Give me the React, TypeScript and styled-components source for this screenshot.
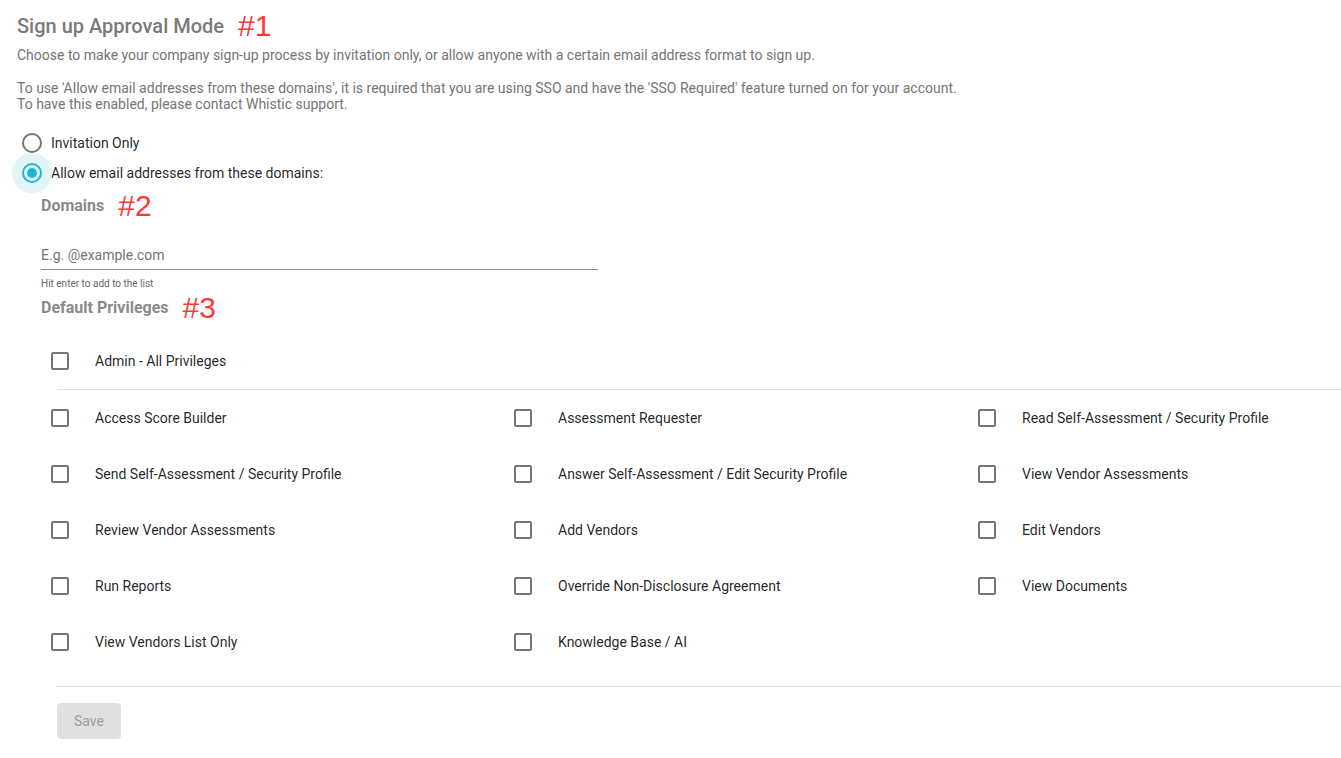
import { ReactNode } from 'react';
import styled, { createGlobalStyle } from 'styled-components';

const GlobalStyle = createGlobalStyle`
  html, body {
    margin: 0;
    padding: 0;
    background: #fff;
    overflow-x: hidden;
  }
  body {
    font-family: Roboto, 'Liberation Sans', Arial, sans-serif;
    -webkit-font-smoothing: antialiased;
  }
`;

const privileges = [
  'Access Score Builder',
  'Assessment Requester',
  'Read Self-Assessment / Security Profile',
  'Send Self-Assessment / Security Profile',
  'Answer Self-Assessment / Edit Security Profile',
  'View Vendor Assessments',
  'Review Vendor Assessments',
  'Add Vendors',
  'Edit Vendors',
  'Run Reports',
  'Override Non-Disclosure Agreement',
  'View Documents',
  'View Vendors List Only',
  'Knowledge Base / AI',
];

const SectionTitle = ({ children, tag, size }: { children: ReactNode; tag: string; size: 'lg' | 'md' }) => (
  <StyledTitleRow $size={size}>
    <StyledTitle $size={size}>{children}</StyledTitle>
    <StyledTag>{tag}</StyledTag>
  </StyledTitleRow>
);

const Radio = ({ checked, label }: { checked?: boolean; label: string }) => (
  <StyledRadioRow>
    <StyledRadioWrap>
      {checked && <StyledHalo />}
      <StyledRadioRing $checked={checked}>{checked && <StyledRadioDot />}</StyledRadioRing>
    </StyledRadioWrap>
    <StyledRadioLabel>{label}</StyledRadioLabel>
  </StyledRadioRow>
);

const Checkbox = ({ label }: { label: string }) => (
  <StyledCheckRow>
    <StyledBox />
    <StyledCheckLabel>{label}</StyledCheckLabel>
  </StyledCheckRow>
);

const App = () => {
  return (
    <>
      <GlobalStyle />
      <StyledPage>
        <SectionTitle size="lg" tag="#1">
          Sign up Approval Mode
        </SectionTitle>
        <StyledText>
          Choose to make your company sign-up process by invitation only, or allow anyone with a certain email
          address format to sign up.
        </StyledText>
        <StyledText $gap>
          To use 'Allow email addresses from these domains', it is required that you are using SSO and have the 'SSO
          Required' feature turned on for your account.
          <br />
          To have this enabled, please contact Whistic support.
        </StyledText>

        <StyledRadioGroup>
          <Radio label="Invitation Only" />
          <Radio checked label="Allow email addresses from these domains:" />
        </StyledRadioGroup>

        <StyledDomains>
          <SectionTitle size="md" tag="#2">
            Domains
          </SectionTitle>
          <StyledInput placeholder="E.g. @example.com" />
          <StyledHelper>Hit enter to add to the list</StyledHelper>

          <SectionTitle size="md" tag="#3">
            Default Privileges
          </SectionTitle>
          <StyledAdmin>
            <Checkbox label="Admin - All Privileges" />
          </StyledAdmin>
          <StyledDivider />
          <StyledGrid>
            {privileges.map((p) => (
              <Checkbox key={p} label={p} />
            ))}
          </StyledGrid>
          <StyledDivider $bottom />
          <StyledSave disabled>Save</StyledSave>
        </StyledDomains>
      </StyledPage>
    </>
  );
};

export default App;

const StyledPage = styled.div`
  padding: 8px 0 19px 17px;
`;

const StyledTitleRow = styled.div<{ $size: 'lg' | 'md' }>`
  display: flex;
  align-items: center;
  gap: ${(p) => (p.$size === 'lg' ? '14px' : '14px')};
  height: ${(p) => (p.$size === 'lg' ? '36px' : '34px')};
  margin-top: ${(p) => (p.$size === 'lg' ? '0' : '1px')};
`;

const StyledTitle = styled.h2<{ $size: 'lg' | 'md' }>`
  margin: 0;
  font-size: ${(p) => (p.$size === 'lg' ? '20px' : '16px')};
  font-weight: ${(p) => (p.$size === 'lg' ? 500 : 700)};
  color: ${(p) => (p.$size === 'lg' ? '#7a7a7a' : '#8a8a8a')};
  line-height: 1.2;
`;

const StyledTag = styled.span`
  font-family: 'Liberation Sans', Arial, sans-serif;
  font-size: 30px;
  line-height: 1;
  color: #fb3a3a;
`;

const StyledText = styled.p<{ $gap?: boolean }>`
  margin: ${(p) => (p.$gap ? '17px' : '3px')} 0 0;
  font-size: 14px;
  line-height: 16px;
  color: #757575;
`;

const StyledRadioGroup = styled.div`
  margin-top: 16px;
  display: flex;
  flex-direction: column;
`;

const StyledRadioRow = styled.label`
  display: flex;
  align-items: center;
  height: 30px;
`;

const StyledRadioWrap = styled.span`
  position: relative;
  width: 20px;
  height: 20px;
  margin-left: 5px;
  margin-right: 9px;
`;

const StyledHalo = styled.span`
  position: absolute;
  left: -10px;
  top: -10px;
  width: 40px;
  height: 40px;
  border-radius: 50%;
  background: #e1f5f9;
`;

const StyledRadioRing = styled.span<{ $checked?: boolean }>`
  position: relative;
  box-sizing: border-box;
  display: flex;
  align-items: center;
  justify-content: center;
  width: 20px;
  height: 20px;
  border-radius: 50%;
  border: 2px solid ${(p) => (p.$checked ? '#1bb6d3' : '#757575')};
`;

const StyledRadioDot = styled.span`
  width: 10px;
  height: 10px;
  border-radius: 50%;
  background: #1bb6d3;
`;

const StyledRadioLabel = styled.span`
  font-size: 14px;
  color: rgba(0, 0, 0, 0.87);
`;

const StyledDomains = styled.div`
  padding-left: 24px;
`;

const StyledInput = styled.input`
  display: block;
  box-sizing: border-box;
  width: 557px;
  height: 32px;
  margin-top: 15px;
  padding: 2px 0 0;
  border: none;
  border-bottom: 1px solid #8a8a8a;
  outline: none;
  font-family: inherit;
  font-size: 14px;
  color: #212121;
  background: transparent;

  &::placeholder {
    color: #757575;
  }
`;

const StyledHelper = styled.div`
  margin-top: 8px;
  height: 12px;
  font-size: 10px;
  line-height: 12px;
  color: #666;
`;

const StyledAdmin = styled.div`
  margin-top: 8px;
`;

const StyledCheckRow = styled.label`
  display: flex;
  align-items: center;
  height: 56px;
  padding-left: 10px;
`;

const StyledBox = styled.span`
  box-sizing: border-box;
  flex: none;
  width: 18px;
  height: 18px;
  border: 2px solid #757575;
  border-radius: 2px;
  margin-right: 26px;
`;

const StyledCheckLabel = styled.span`
  font-size: 14px;
  color: rgba(0, 0, 0, 0.87);
  white-space: nowrap;
`;

const StyledDivider = styled.hr<{ $bottom?: boolean }>`
  margin: ${(p) => (p.$bottom ? '16px 0 16px 16px' : '0 0 0 16px')};
  border: none;
  border-top: 1px solid #e0e0e0;
`;

const StyledGrid = styled.div`
  display: grid;
  grid-template-columns: 463px 464px 1fr;
`;

const StyledSave = styled.button`
  margin-left: 16px;
  width: 64px;
  height: 36px;
  border: none;
  border-radius: 4px;
  background: #e0e0e0;
  color: #9e9e9e;
  font-family: inherit;
  font-size: 14px;
`;
